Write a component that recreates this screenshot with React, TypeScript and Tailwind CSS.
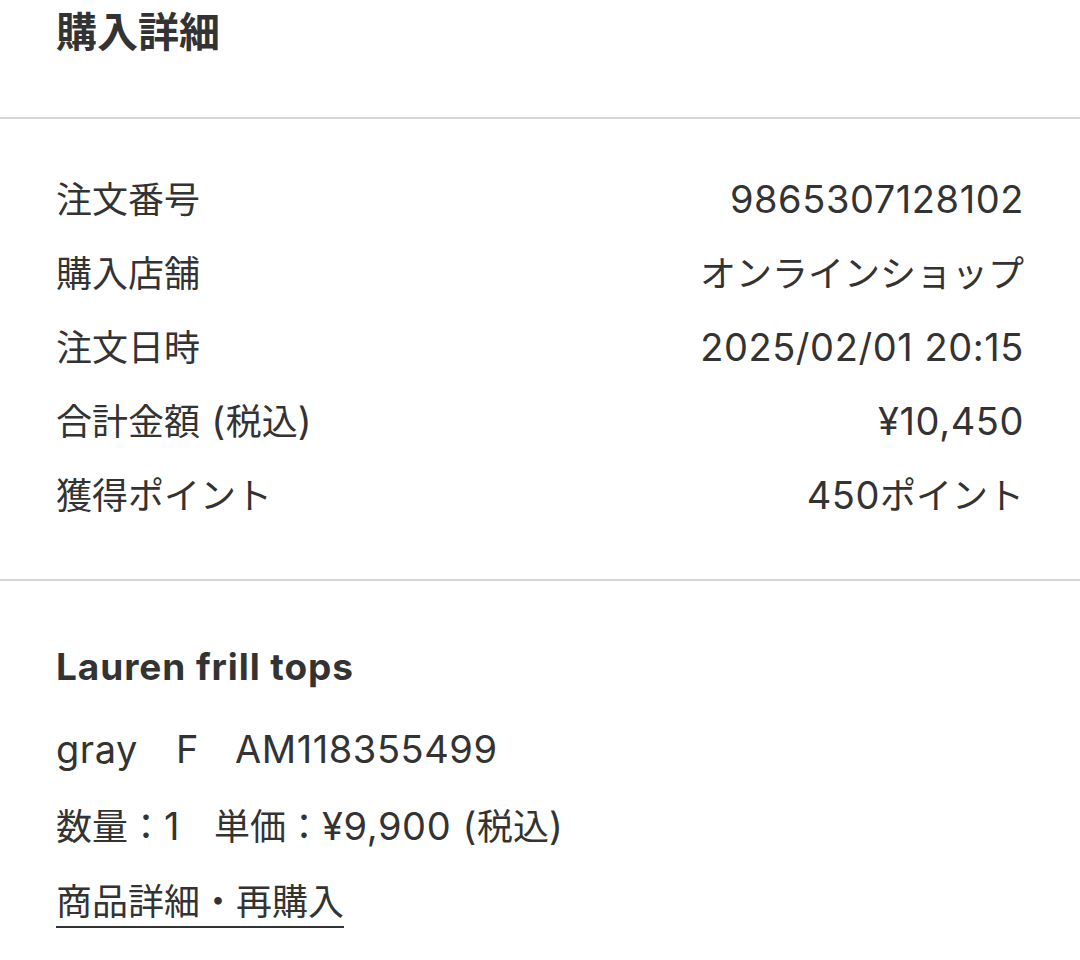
import { Fragment } from "react";

const rows: [string, string][] = [
  ["注文番号", "9865307128102"],
  ["購入店舗", "オンラインショップ"],
  ["注文日時", "2025/02/01 20:15"],
  ["合計金額 (税込)", "¥10,450"],
  ["獲得ポイント", "450ポイント"],
];

// latin runs are drawn a bit larger than the kana/kanji, like the iOS system font
function Mixed({ text }: { text: string }) {
  const parts = text.split(/([\u0000-\u007F¥]+)/);
  return (
    <>
      {parts.map((p, i) =>
        /^[\u0000-\u007F¥]+$/.test(p) ? (
          <span key={i} className="text-[38px] leading-none tracking-[0.015em]">
            {p}
          </span>
        ) : (
          <Fragment key={i}>{p}</Fragment>
        )
      )}
    </>
  );
}

export default function App() {
  return (
    <div
      className="min-h-[960px] w-[1080px] bg-white text-[#333333]"
      style={{ fontFamily: "Inter, 'Noto Sans CJK JP', sans-serif" }}
    >
      <div className="px-[56px] pt-[2px] pb-[55px]">
        <h1 className="text-[41px] font-bold leading-[60px]">購入詳細</h1>
      </div>
      <div className="h-[2px] bg-[#d6d6d6]" />

      <div className="px-[56px] pt-[44px] pb-[46px]">
        {rows.map(([label, value]) => (
          <div key={label} className="flex justify-between text-[36px] leading-[74px]">
            <span>
              <Mixed text={label} />
            </span>
            <span>
              <Mixed text={value} />
            </span>
          </div>
        ))}
      </div>
      <div className="h-[2px] bg-[#d6d6d6]" />

      <div className="px-[56px] pt-[62px]">
        <p className="text-[37px] font-bold leading-[48px] tracking-[0.025em]">Lauren frill tops</p>
        <p className="mt-[34px] text-[38px] leading-[48px] tracking-[0.015em]">
          <span className="mr-[38px]">gray</span>
          <span className="mr-[36px]">F</span>
          <span>AM118355499</span>
        </p>
        <p className="mt-[30px] text-[36px] leading-[48px]">
          <Mixed text="数量：1" />
          <span className="inline-block w-[34px]" />
          <Mixed text="単価：¥9,900 (税込)" />
        </p>
        <a className="mt-[27px] inline-block border-b-2 border-[#333333] text-[36px] leading-[48px]">
          商品詳細・再購入
        </a>
      </div>
    </div>
  );
}
